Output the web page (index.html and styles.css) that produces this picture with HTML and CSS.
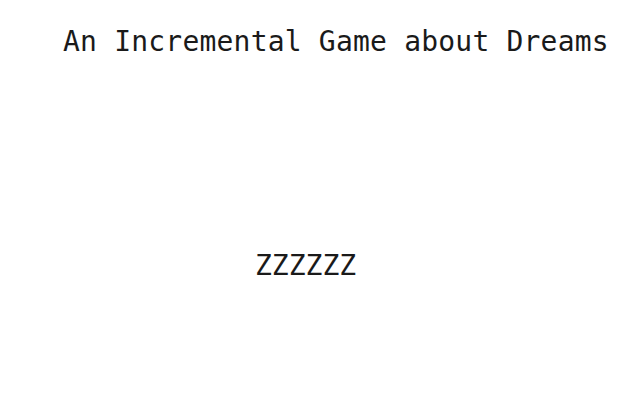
FILE: index.html
```html
<!DOCTYPE html>
<html>
<head>
<meta charset="utf-8">
<link rel="stylesheet" href="styles.css">
</head>
<body>
<div class="page">
  <h1 class="title">An Incremental Game about Dreams</h1>
  <div class="sleep">ZZZZZZ</div>
</div>
</body>
</html>
```
FILE: styles.css
```css
html, body {
  margin: 0;
  padding: 0;
  background: #ffffff;
}
.page {
  width: 640px;
  height: 400px;
  font-family: "DejaVu Sans Mono", "Liberation Mono", monospace;
  color: #1a1a1a;
  display: flex;
  flex-direction: column;
}
.title {
  margin: 0;
  padding: 22px 0 0 63px;
  font-size: 28px;
  font-weight: normal;
  letter-spacing: 0.2px;
  line-height: 40px;
  white-space: nowrap;
}
.sleep {
  padding: 184px 0 0 255px;
  font-size: 28px;
  line-height: 40px;
}
```
